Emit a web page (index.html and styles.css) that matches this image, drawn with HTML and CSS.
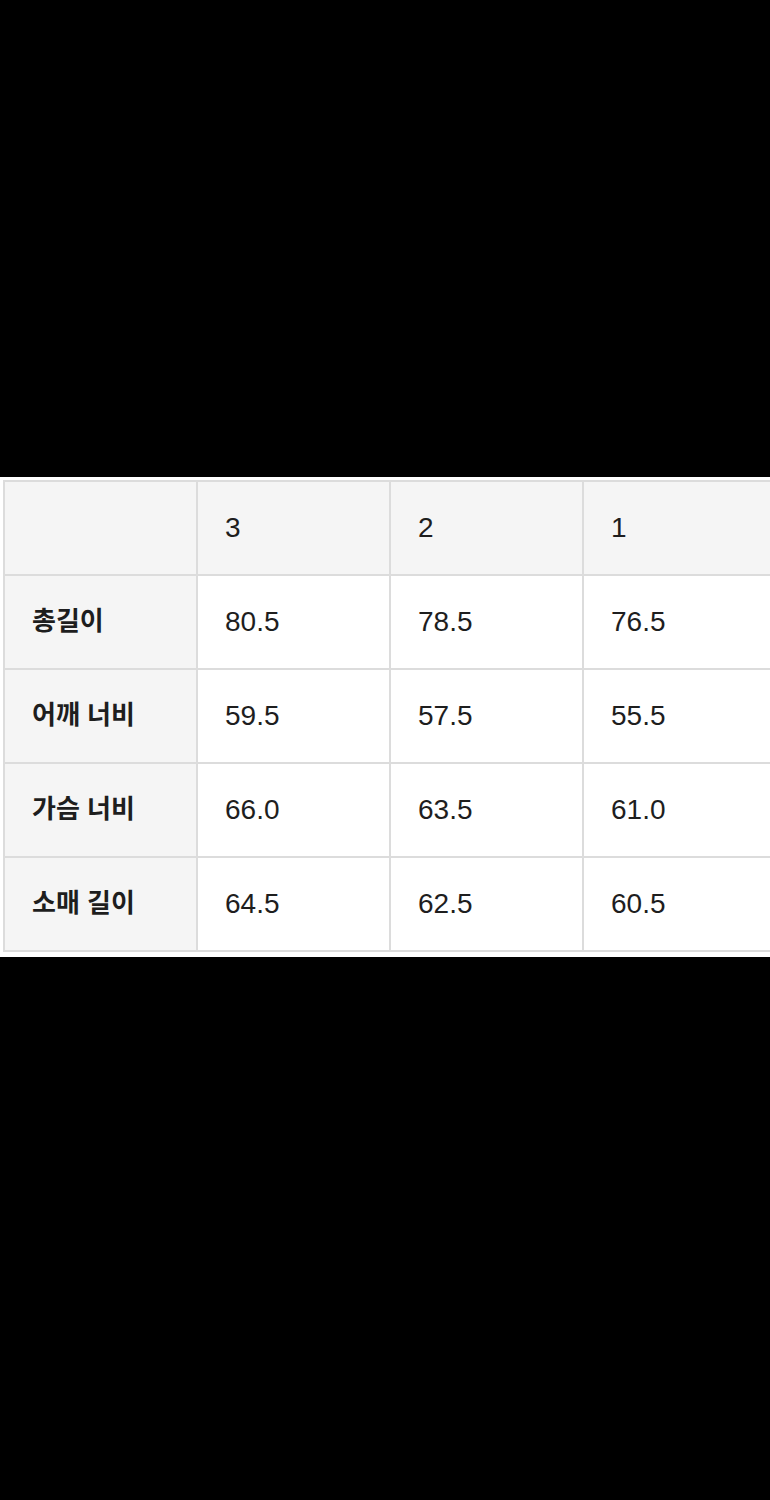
FILE: index.html
```html
<!DOCTYPE html>
<html lang="ko">
<head>
<meta charset="utf-8">
<link rel="stylesheet" href="styles.css">
</head>
<body>
<div class="top"></div>
<div class="band">
  <table class="size">
    <colgroup>
      <col class="c-label"><col class="c-val"><col class="c-val"><col class="c-val">
    </colgroup>
    <tr class="head">
      <th class="label"></th><th>3</th><th>2</th><th>1</th>
    </tr>
    <tr><th class="label">총길이</th><td>80.5</td><td>78.5</td><td>76.5</td></tr>
    <tr><th class="label">어깨 너비</th><td>59.5</td><td>57.5</td><td>55.5</td></tr>
    <tr><th class="label">가슴 너비</th><td>66.0</td><td>63.5</td><td>61.0</td></tr>
    <tr><th class="label">소매 길이</th><td>64.5</td><td>62.5</td><td>60.5</td></tr>
  </table>
</div>
<div class="bottom"></div>
</body>
</html>
```

FILE: styles.css
```css
html, body {
  margin: 0;
  padding: 0;
  background: #000;
}
.top {
  height: 477px;
}
.band {
  background: #fff;
  height: 480px;
  padding: 3px 0 0 3px;
  box-sizing: border-box;
  overflow: hidden;
  width: 770px;
}
.size {
  border-collapse: collapse;
  table-layout: fixed;
  width: 772px;
  font-family: "Liberation Sans", "Noto Sans CJK KR", sans-serif;
  color: #1e1e1e;
}
.c-label { width: 193px; }
.c-val { width: 193px; }
.size th, .size td {
  border: 2px solid #dcdcdc;
  height: 94px;
  padding: 0 0 0 27px;
  text-align: left;
  font-weight: normal;
  font-size: 28px;
  box-sizing: border-box;
}
.size .head th {
  background: #f5f5f5;
}
.size th.label {
  background: #f5f5f5;
  font-weight: 600;
  font-size: 26px;
  padding-bottom: 8px;
  font-family: "Noto Sans CJK KR", sans-serif;
}
```
